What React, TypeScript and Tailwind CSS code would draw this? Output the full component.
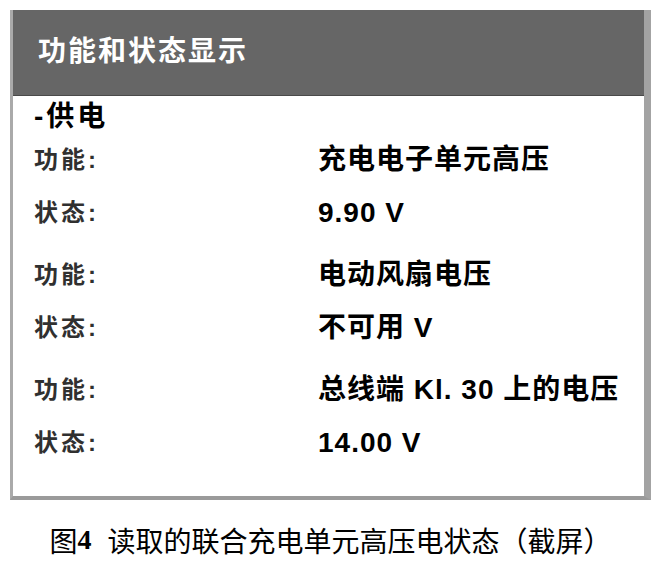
const rows = [
  { label: "功能:", value: "充电电子单元高压" },
  { label: "状态:", value: "9.90 V" },
  { label: "功能:", value: "电动风扇电压", gap: true },
  { label: "状态:", value: "不可用 V" },
  { label: "功能:", value: "总线端 Kl. 30 上的电压", gap: true },
  { label: "状态:", value: "14.00 V" },
];

function InfoRow({ label, value, gap }: { label: string; value: string; gap?: boolean }) {
  return (
    <div className={`flex h-[53px] items-center ${gap ? "mt-[9px]" : ""}`}>
      <span className="w-[284px] shrink-0 text-[24px] font-bold tracking-[3px] text-[#303030]">{label}</span>
      <span className="text-[28px] font-bold tracking-[1px] text-black">{value}</span>
    </div>
  );
}

export default function App() {
  return (
    <div
      className="min-h-[563px] w-[665px] bg-white pl-[10px] pt-[10px]"
      style={{ fontFamily: '"Liberation Sans", "Noto Sans CJK SC", sans-serif' }}
    >
      {/* status panel */}
      <div className="flex h-[490px] w-[641px] flex-col border-b-[4px] border-l-[3px] border-r-[7px] border-b-[#9a9a9a] border-l-[#aaaaaa] border-r-[#a3a3a3] bg-white">
        <div className="flex h-[86px] shrink-0 items-center border-b border-[#4a4a4a] bg-[#666666] pb-[2px] pl-[25px]">
          <span className="text-[28px] font-bold leading-none tracking-[2px] text-white">功能和状态显示</span>
        </div>
        <div className="flex flex-col pl-[21px]">
          <div className="mt-[5px] flex h-[32px] items-center text-[28px] font-bold tracking-[3px] text-black">
            -供电
          </div>
          {rows.map((r, i) => (
            <InfoRow key={i} {...r} />
          ))}
        </div>
      </div>

      {/* caption */}
      <div className="flex h-[80px] w-[641px] items-center justify-center text-[28px] text-black">
        <span style={{ fontFamily: '"Noto Sans CJK SC", sans-serif' }}>图</span>
        <span className="font-bold" style={{ fontFamily: '"Liberation Serif", serif' }}>
          4
        </span>
        <span className="ml-[16px]" style={{ fontFamily: '"Noto Sans CJK SC", sans-serif' }}>
          读取的联合充电单元高压电状态（截屏）
        </span>
      </div>
    </div>
  );
}
